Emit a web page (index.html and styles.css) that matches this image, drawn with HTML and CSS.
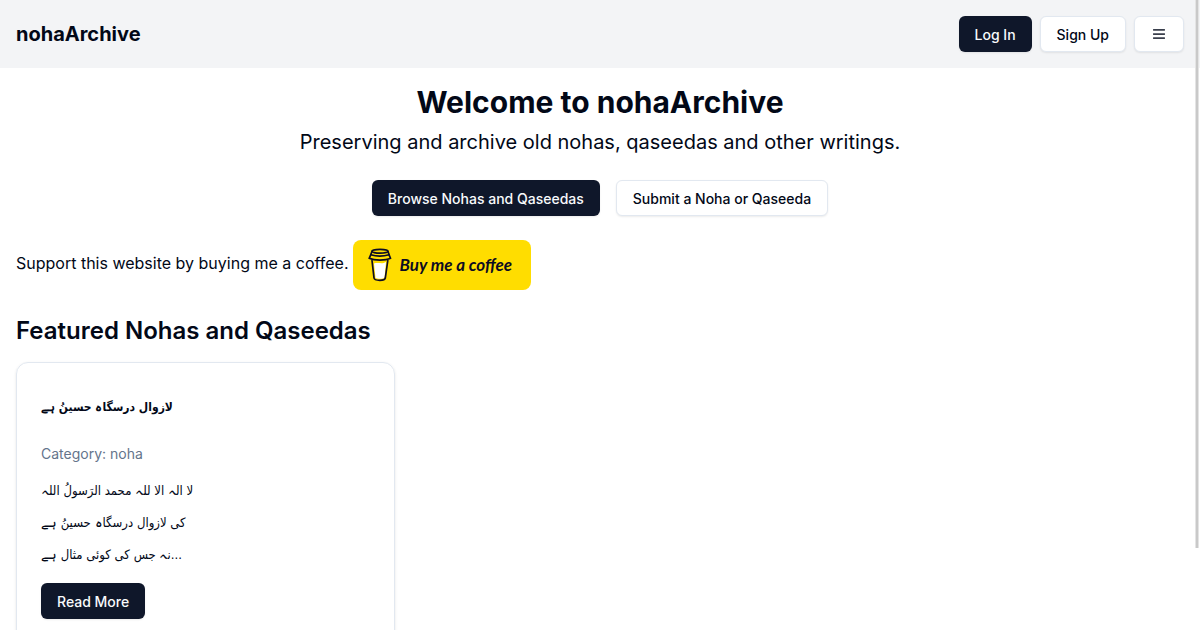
FILE: index.html
```
<!DOCTYPE html>
<html lang="en">
<head>
<meta charset="utf-8">
<meta name="viewport" content="width=device-width, initial-scale=1">
<title>nohaArchive</title>
<link rel="stylesheet" href="styles.css">
</head>
<body>
<header class="site-header">
  <a class="brand" href="#">nohaArchive</a>
  <nav class="actions">
    <button class="btn primary" type="button">Log In</button>
    <button class="btn outline" type="button">Sign Up</button>
    <button class="btn outline menu" type="button" aria-label="Menu">
      <svg class="menu-icon" viewBox="0 0 16 16" aria-hidden="true"><g fill="#3a3f4c"><rect x="2" y="3" width="12" height="1.700" rx=".4"/><rect x="2" y="7.200" width="12" height="1.700" rx=".4"/><rect x="2" y="11.300" width="12" height="1.700" rx=".4"/></g></svg>
    </button>
  </nav>
</header>
<main class="content">
  <section class="hero">
    <h1 class="hero-title">Welcome to nohaArchive</h1>
    <p class="hero-text">Preserving and archive old nohas, qaseedas and other writings.</p>
    <div class="hero-actions">
      <a class="btn primary" href="#">Browse Nohas and Qaseedas</a>
      <a class="btn outline" href="#">Submit a Noha or Qaseeda</a>
    </div>
  </section>
  <section class="support">
    <p class="support-text">Support this website by buying me a coffee.</p>
    <a class="coffee" href="#">
      <svg class="cup" viewBox="0 0 24 34" aria-hidden="true">
        <path fill="#fff" d="M6 15.500c4-1.500 8 1 12-1.500l-1.500 16c-2 1-7 1-9 0z"/>
        <g fill="none" stroke="#0d0c22" stroke-width="1.700" stroke-linecap="round" stroke-linejoin="round">
          <ellipse cx="12" cy="3.300" rx="8" ry="1.900"/>
          <path d="M4 3.500 2.800 6.500M20 3.500l1 3"/>
          <path d="M2.800 6.700c5 1.600 13 1.600 18.200 0l1.500 3.600c-5 2.400-16 2.400-21.300 0z"/>
          <path d="M4 12.500 6 30c.2 1.700 2 2.300 5.800 2.300s5.200-.6 5.500-2.300l2.500-17.500"/>
        </g>
      </svg>
      <span class="coffee-text">Buy me a coffee</span>
    </a>
  </section>
  <section class="featured">
    <h2 class="section-title">Featured Nohas and Qaseedas</h2>
    <div class="cards">
      <article class="card">
        <h3 class="card-title" lang="ur">لازوال درسگاہ حسینُ ہے</h3>
        <p class="category">Category: noha</p>
        <p class="verse" lang="ur">لا الہ الا للہ محمد الرَسولُ اللہ<br>کی لازوال درسگاہ حسینُ ہے<br>نہ جس کی کوئی مثال ہے...</p>
        <a class="btn primary" href="#">Read More</a>
      </article>
    </div>
  </section>
</main>
<div class="scroll-thumb"></div>
</body>
</html>
```
FILE: styles.css
```
* { box-sizing: border-box; margin: 0; }
body {
  height: 100vh;
  overflow: hidden;
  background: #fff;
  color: #020817;
  font: 16px/24px Inter, "Noto Sans", sans-serif;
}
a { color: inherit; text-decoration: none; }
.site-header {
  display: flex;
  align-items: center;
  justify-content: space-between;
  padding: 16px;
  background: #f3f4f6;
}
.brand { font-size: 20px; line-height: 28px; font-weight: 700; }
.actions { display: flex; gap: 8px; }
.btn {
  display: inline-flex;
  align-items: center;
  justify-content: center;
  height: 36px;
  padding: 2px 16px 0;
  border: 0;
  border-radius: 6px;
  font: 500 14px/20px Inter, "Noto Sans", sans-serif;
  white-space: nowrap;
  box-shadow: 0 1px 2px rgba(0, 0, 0, .08);
}
.primary { background: #0f172a; color: #f8fafc; }
.outline { background: #fff; color: #020817; border: 1px solid #e2e8f0; }
.menu { padding-top: 0; }
.menu-icon { width: 16px; height: 16px; }
.content { padding: 16px; }
.hero { text-align: center; }
.hero-title { font-size: 30px; line-height: 36px; font-weight: 700; }
.hero-text { margin-top: 8px; font-size: 20px; line-height: 28px; }
.hero-actions { display: flex; justify-content: center; gap: 16px; margin-top: 24px; }
.support { display: flex; align-items: center; gap: 4px; margin-top: 24px; }
.support-text { padding-bottom: 4px; }
.coffee {
  display: flex;
  align-items: center;
  gap: 8px;
  width: 178px;
  height: 50px;
  padding: 0 15px;
  border-radius: 8px;
  background: #fd0;
  color: #0d0c22;
}
.cup { flex: none; width: 24px; height: 34px; }
.coffee-text { font: italic 700 17px/24px Lato, cursive; white-space: nowrap; }
.section-title { margin: 25px 0 15px; font-size: 24px; line-height: 32px; font-weight: 600; }
.cards { display: grid; grid-template-columns: repeat(3, 1fr); gap: 16px; }
.card {
  padding: 24px;
  border: 1px solid #e2e8f0;
  border-radius: 12px;
  box-shadow: 0 1px 3px rgba(0, 0, 0, .1);
}
.card-title { font: 700 12px/40px "DejaVu Sans Condensed", "DejaVu Sans", sans-serif; }
.category { margin: 16px 0 10px; color: #64748b; font-size: 14px; line-height: 22px; }
.verse { margin-bottom: 12px; font: 13px/32px "DejaVu Sans Condensed", "DejaVu Sans", sans-serif; }
.scroll-thumb {
  position: fixed;
  top: 0;
  right: 1px;
  width: 4px;
  height: 87vh;
  background: #c9c9c9;
  border: solid #e4e4e4;
  border-width: 0 1px;
}
```
